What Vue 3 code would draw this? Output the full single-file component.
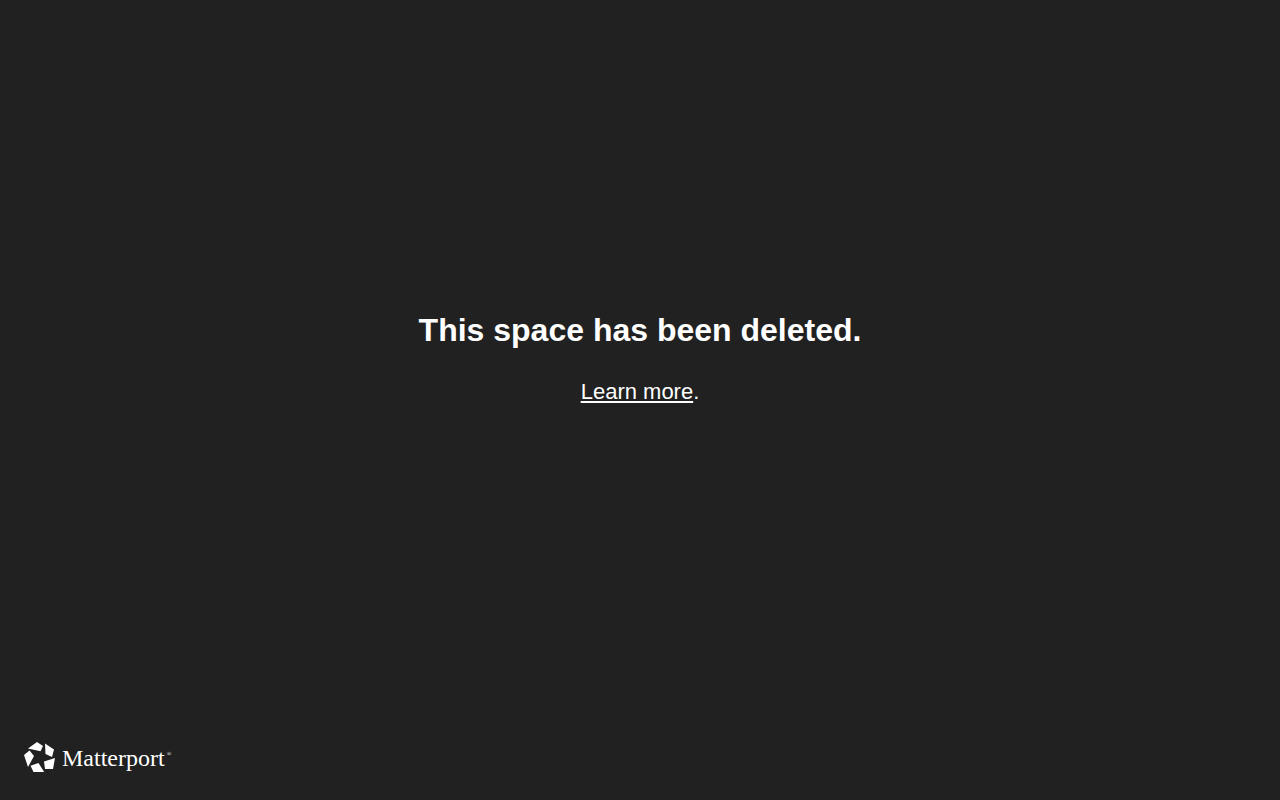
<script setup>
const message = 'This space has been deleted.'
</script>

<template>
  <div class="page">
    <main class="message">
      <h1>{{ message }}</h1>
      <p><a href="#">Learn more</a>.</p>
    </main>
    <footer class="brand">
      <svg class="mark" viewBox="0 0 32 32" aria-hidden="true">
        <path d="M4 8.5 13 2 19 6 16.5 11.2Z" />
        <path d="M21 3.5 30 9.5 28 17 21.5 14Z" />
        <path d="M31 18 29 29 21 29 20 21.5Z" />
        <path d="M6.5 25.7 14.5 23 20.2 32 9.5 32Z" />
        <path d="M0 15 5.5 10.5 10 16 4 27Z" />
      </svg>
      <span class="name">Matterport</span>
      <span class="registered">®</span>
    </footer>
  </div>
</template>

<style>
body {
  background: #212121;
}
</style>

<style scoped>
.page {
  min-height: 100vh;
  display: flex;
  flex-direction: column;
  background: #212121;
  color: #fff;
  font-family: "Liberation Sans", Arial, sans-serif;
}

.message {
  flex: 1;
  display: flex;
  flex-direction: column;
  align-items: center;
  justify-content: center;
  gap: 26px;
  padding-bottom: 22px;
  text-align: center;
}

h1 {
  margin: 0;
  font-size: 32px;
  line-height: 40px;
}

p {
  margin: 0;
  font-size: 22px;
  line-height: 32px;
}

a {
  color: inherit;
}

.brand {
  display: flex;
  align-items: flex-start;
  padding: 0 24px 24px;
  font-family: "Liberation Serif", "Times New Roman", serif;
}

.mark {
  width: 32px;
  height: 32px;
  margin-right: 6px;
  fill: #fff;
}

.name {
  font-size: 24px;
  line-height: 36px;
}

.registered {
  margin-left: 2px;
  font-size: 6px;
  line-height: 28px;
}
</style>
